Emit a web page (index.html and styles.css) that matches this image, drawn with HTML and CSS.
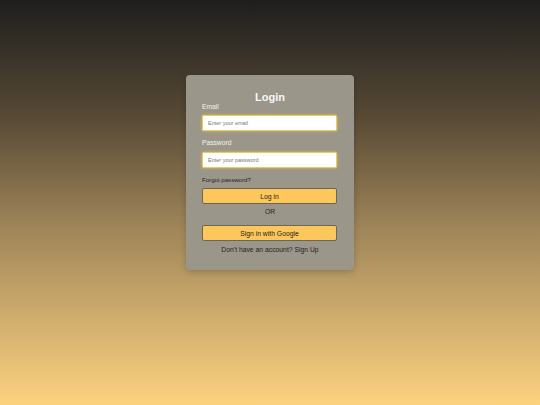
FILE: index.html
```html
<!DOCTYPE html>
<html lang="en">
<head>
<meta charset="utf-8">
<title>Login</title>
<link rel="stylesheet" href="styles.css">
</head>
<body>
<main class="page">
  <form class="card">
    <h2 class="title">Login</h2>
    <label class="label" for="email">Email</label>
    <input class="field" id="email" type="email" placeholder="Enter your email">
    <label class="label label-gap" for="password">Password</label>
    <input class="field" id="password" type="password" placeholder="Enter your password">
    <a class="forgot" href="#">Forgot password?</a>
    <button class="btn" type="button">Log in</button>
    <p class="or">OR</p>
    <button class="btn btn-google" type="button">Sign in with Google</button>
    <p class="signup">Don't have an account? Sign Up</p>
  </form>
</main>
</body>
</html>
```

FILE: styles.css
```css
* { box-sizing: border-box; }
html, body { margin: 0; padding: 0; }
body {
  width: 540px;
  height: 405px;
  overflow: hidden;
  font-family: "Liberation Sans", Arial, sans-serif;
  background: linear-gradient(to bottom, #1e1e1e 0%, #5a4c36 30%, #9c8357 55%, #d2b06e 80%, #fdd27f 100%);
}
.page {
  display: flex;
  justify-content: center;
  padding-top: 75px;
}
.card {
  width: 168px;
  padding: 17px 16px 16px;
  background: #9b968a;
  border-radius: 4px;
  box-shadow: 0 2px 6px rgba(0, 0, 0, 0.2);
  display: flex;
  flex-direction: column;
}
.title {
  margin: 0 0 1px;
  font-size: 11px;
  line-height: 10px;
  font-weight: bold;
  color: #f7f7f5;
  text-align: center;
}
.label {
  display: block;
  font-size: 6.7px;
  line-height: 8px;
  color: #f4f4f2;
  margin-bottom: 4px;
}
.label-gap { margin-bottom: 5px; }
.field {
  display: block;
  width: 135px;
  height: 16px;
  margin: 0 0 8px;
  padding: 0 5px;
  border: 1px solid #efca55;
  border-radius: 1.5px;
  background: #ffffff;
  box-shadow: 0 0 3px rgba(245, 205, 85, 0.7);
  font-family: inherit;
  font-size: 5.5px;
  color: #333;
  outline: none;
}
.field::placeholder { color: #757575; }
.forgot {
  display: block;
  font-size: 6.1px;
  line-height: 8px;
  color: #1f1f1f;
  text-decoration: none;
  margin-bottom: 4px;
}
.btn {
  display: flex;
  align-items: center;
  justify-content: center;
  width: 135px;
  height: 16px;
  padding: 0;
  border: 1px solid #6f6550;
  border-radius: 2px;
  background: #fdc75c;
  font-family: inherit;
  font-size: 6.8px;
  color: #1e1e1e;
}
.or {
  margin: 4px 0 9px;
  font-size: 6.8px;
  line-height: 8px;
  text-align: center;
  color: #1f1f1f;
}
.signup {
  margin: 5px 0 0;
  font-size: 6.8px;
  line-height: 8px;
  text-align: center;
  color: #1f1f1f;
}
```
